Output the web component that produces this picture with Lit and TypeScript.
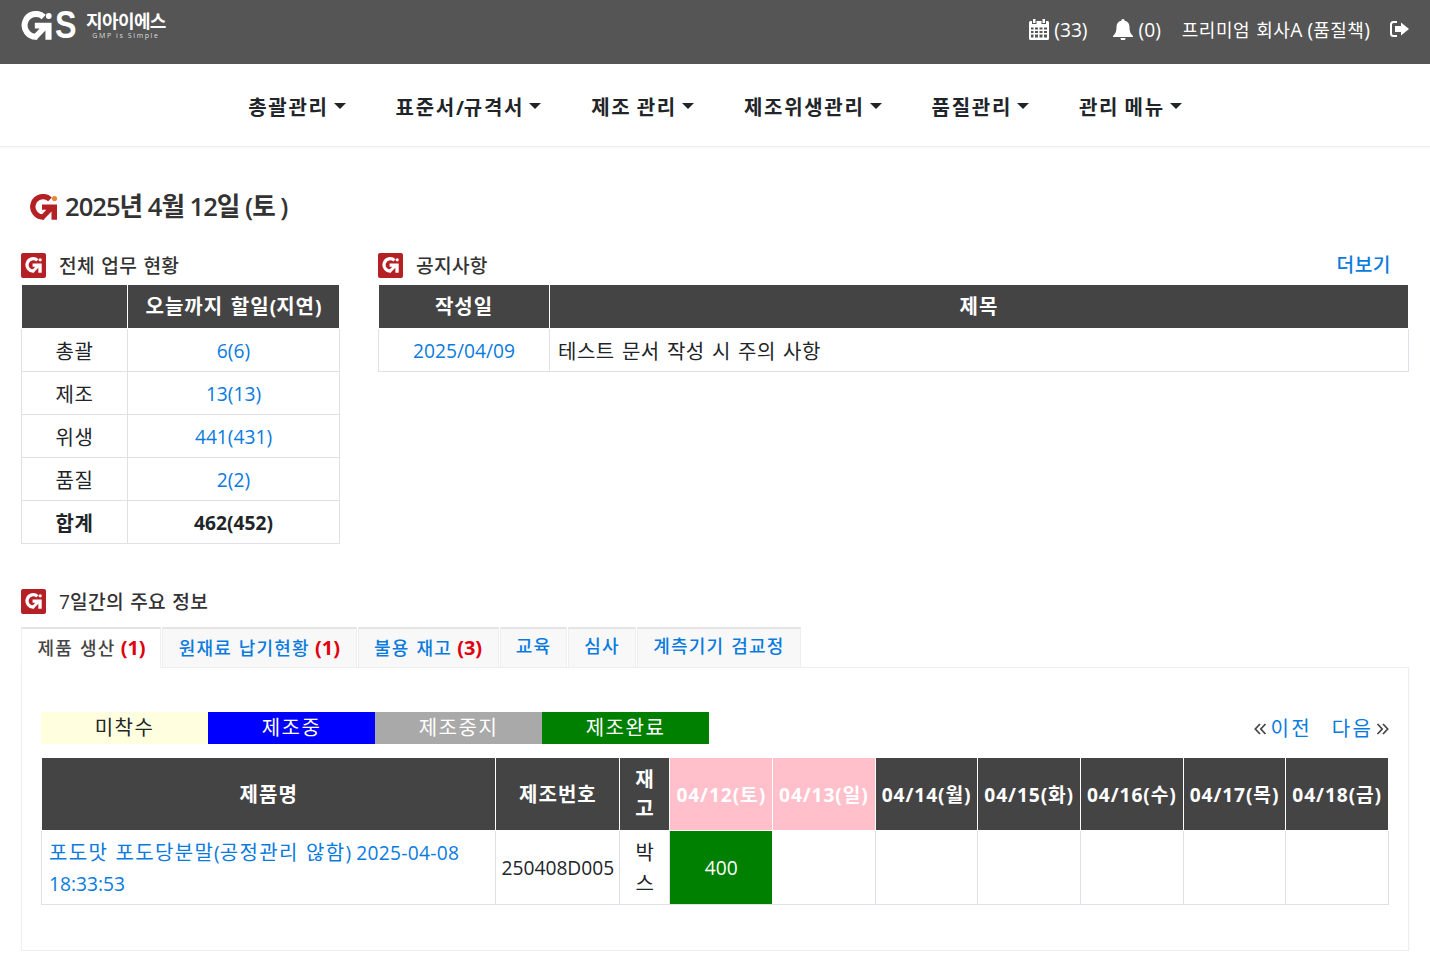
import { LitElement, html, css } from "lit";
import { customElement } from "lit/decorators.js";

const gMark = (cls: string, main: string, dot: string) => html`<svg class=${cls} viewBox="0 0 28 26" aria-hidden="true">
  <path d="M20.500 5.400A10.200 10.200 0 1 0 14.500 23" fill="none" stroke=${main} stroke-width="5.400"/>
  <path d="M12.500 10.500H27.500V25.800H22V17.500L14 25.800 10.500 22.500 16.800 15.800H12.500Z" fill=${main}/>
  <circle cx="25" cy="4.500" r="2.600" fill=${dot}/>
</svg>`;

/* Hangul runs get their own size and spacing: wraps each run in a span, leaves Latin and digits alone. */
const h = (t: string) =>
  t.split(/([\uAC00-\uD7A3]+(?:\s+[\uAC00-\uD7A3]+)*)/).map((part, i) =>
    i % 2 ? html`<span class="h">${part}</span>` : part
  );

const title = (t: string) => html`<h3><span class="badge">${gMark("badge-g", "#fff", "#fff")}</span><span>${h(t)}</span></h3>`;

const caret = html`<span class="caret"></span>`;

@customElement("app-root")
export class AppRoot extends LitElement {
  static styles = css`
    :host { display: block; font-family: "Open Sans", "Noto Sans CJK KR", sans-serif; color: #212529; font-size: 19.2px; background: #fff; }
    * { box-sizing: border-box; }
    .h { font-size: 20px; letter-spacing: .5px; word-spacing: 1.500px; }
    a { color: #0a7bde; text-decoration: none; }
    .top { height: 64px; background: #555; color: #fff; display: flex; justify-content: space-between; padding: 0 21px; }
    .logo { display: flex; align-items: flex-start; padding-top: 11px; }
    .logo-mark { display: flex; align-items: center; height: 29px; font-family: "Liberation Sans", sans-serif; font-weight: 700; font-size: 38px; line-height: 29px; width: 65px; }
    .logo-mark svg { width: 35px; height: 29px; flex: none; margin-left: -2px; }
    .logo-mark span { margin-left: 1px; transform: scaleX(.85); transform-origin: left center; }
    .logo-text { display: flex; flex-direction: column; align-items: center; margin-top: 1px; line-height: 1; }
    .logo-text b { font-size: 18px; font-weight: 700; letter-spacing: -.6px; height: 19px; line-height: 19px; }
    .logo-text small { font-size: 7px; letter-spacing: 1.600px; margin-top: 1px; color: #ddd; }
    .user { display: flex; align-items: center; height: 58px; }
    .user > span { display: flex; align-items: center; gap: 5px; }
    .user > span > svg { fill: #fff; flex: none; }
    .user .h { font-size: 18px; letter-spacing: .5px; word-spacing: 1px; }
    .u-bell { margin-left: 25px; gap: 6px !important; }
    .u-name { margin-left: 21px; white-space: pre; display: block !important; }
    .u-out { margin-left: 20px; }
    nav { height: 83px; display: flex; justify-content: center; align-items: center; gap: 50px; border-bottom: 1px solid #eee; box-shadow: 0 1px 2px rgba(0,0,0,.04); font-weight: 700; padding-top: 2px; }
    nav div { display: flex; align-items: center; gap: 5px; white-space: pre; }
    nav .h { letter-spacing: 1.700px; word-spacing: -1.500px; }
    .caret { width: 0; height: 0; border-left: 6px solid transparent; border-right: 6px solid transparent; border-top: 6px solid #212529; }
    main { padding: 0 21px; }
    h2 { margin: 0; padding: 18px 0 0 8px; height: 102px; display: flex; align-items: center; font-size: 25.600px; font-weight: 600; letter-spacing: -1px; color: #333; line-height: 34px; }
    h2 svg { width: 29px; height: 26px; margin-right: 7px; }
    h2 .h { font-size: 25.600px; letter-spacing: -1px; word-spacing: 0; }
    .row { display: flex; justify-content: space-between; align-items: flex-start; }
    .left { width: 319px; }
    .right { width: 1031px; }
    .head { display: flex; justify-content: space-between; height: 35px; padding-right: 18px; }
    .head a { height: 32px; line-height: 32px; font-weight: 500; }
    .head a .h { font-size: 19.200px; letter-spacing: .5px; }
    h3 { margin: 0 0 3px; height: 32px; display: flex; align-items: center; gap: 13px; font-size: 19.200px; font-weight: 500; color: #333; }
    h3 .h { font-size: 19.200px; letter-spacing: .3px; word-spacing: 1px; }
    .badge { width: 25px; height: 25px; border-radius: 2px; background: #b52025; display: flex; align-items: center; justify-content: center; flex: none; }
    .badge-g { width: 17px; height: 16px; }
    table { border-collapse: collapse; table-layout: fixed; width: 100%; }
    th { background: #444; color: #fff; font-weight: 700; border: 1px solid #fff; text-align: center; }
    th .h { letter-spacing: 1px; }
    td { border: 1px solid #dee2e6; text-align: center; }
    .t1 th, .t2 th { height: 44px; padding: 0 0 2px; }
    .t1 td, .t2 td { height: 43px; padding: 0; }
    .t1 tr:last-child td { font-weight: 700; }
    .t1 .c1 { width: 106px; }
    .t2 .c1 { width: 171px; }
    .t2 td:last-child { text-align: left; padding-left: 8px; }
    .sec2 { margin-top: 41px; }
    .sec2 h3 { margin-bottom: 0; }
    .tabs { display: flex; height: 41px; margin-top: 10px; gap: 1px; position: relative; z-index: 1; }
    .tabs div { height: 41px; padding: 0 15.500px 2px; display: flex; align-items: center; background: #f8f8f8; border: 1px solid #eee; border-top: 2px solid #e4e4e4; font-size: 20px; font-weight: 500; color: #0a7bde; }
    .tabs div > span { white-space: pre; }
    .tabs .h { font-size: 18px; letter-spacing: 1.200px; word-spacing: 1px; }
    .tabs div.on { background: #fff; color: #444; border-bottom-color: #fff; padding-right: 14.500px; }
    .tabs div.plain { padding: 0 15px 6px; }
    .tabs div.wide { padding: 0 15.500px 6px; }
    .tabs b { color: #e0000f; font-weight: 700; }
    .panel { height: 284px; margin-top: -1px; border: 1px solid #eee; box-shadow: 0 1px 2px rgba(0,0,0,.04); padding: 44px 19px 0; }
    .bar { display: flex; justify-content: space-between; align-items: center; height: 32px; }
    .legend { display: flex; }
    .legend div { width: 167px; height: 32px; line-height: 31px; text-align: center; }
    .legend .h { letter-spacing: 1.500px; }
    .ly { background: lightyellow; }
    .lb { background: blue; color: #fff; }
    .lg { background: darkgray; color: #fff; }
    .lo { background: green; color: #fff; }
    .pager { display: flex; align-items: center; height: 32px; margin-top: -2px; }
    .pager svg { width: 13px; height: 12px; margin-top: 3px; fill: none; stroke: #444; stroke-width: 1.700; }
    .pager a { margin: 0 3px 0 4px; }
    .pager a + a { margin-left: 17px; }
    .pager .h { letter-spacing: 2.200px; }
    .t3 { margin-top: 13px; }
    .t3 th { height: 73px; padding: 0; line-height: 29px; }
    .t3 th.d { white-space: nowrap; letter-spacing: .9px; }
    .t3 th.pink { background: pink; }
    .t3 td { height: 74px; padding: 0; line-height: 31px; }
    .t3 .narrow { padding: 0 7px; }
    .t3 td.name { text-align: left; padding: 1px 6px 0 7px; }
    .t3 td.name .h { letter-spacing: 1.300px; word-spacing: 1px; }
    .t3 td.name .dt { letter-spacing: .3px; }
    .t3 td.val { background: green; color: #fff; border-color: #fff; border-bottom-color: #dee2e6; }
    .cn { width: 454.400px; } .cm { width: 124px; } .cs { width: 50px; }
  `;

  render() {
    const days = ["04/12(토)", "04/13(일)", "04/14(월)", "04/15(화)", "04/16(수)", "04/17(목)", "04/18(금)"];
    return html`
      <header class="top">
        <div class="logo">
          <div class="logo-mark">${gMark("", "#fff", "#fff")}<span>S</span></div>
          <div class="logo-text"><b>지아이에스</b><small>GMP is Simple</small></div>
        </div>
        <div class="user">
          <span><svg width="20" height="21" viewBox="0 0 20 21"><path fill-rule="evenodd" d="M4 0h2.500v4H4zM13.500 0H16v4h-2.500zM1.500 2H3v3h4.500V2h5v3H17V2h1.500A1.500 1.500 0 0 1 20 3.500v16a1.500 1.500 0 0 1-1.500 1.500h-17A1.500 1.500 0 0 1 0 19.500v-16A1.500 1.500 0 0 1 1.500 2ZM2 8.500v2h2.500v-2Zm4 0v2h3v-2Zm4.500 0v2h3v-2Zm4.500 0v2h3v-2ZM2 12v2h2.500v-2Zm4 0v2h3v-2Zm4.500 0v2h3v-2Zm4.500 0v2h3v-2ZM2 15.500v3h2.500v-3Zm4 0v3h3v-3Zm4.500 0v3h3v-3Zm4.500 0v3h3v-3Z"/></svg>(33)</span>
          <span class="u-bell"><svg width="20" height="21" viewBox="0 0 20 21"><path d="M10 0a1.700 1.700 0 0 1 1.700 1.800C15 2.500 16.500 5 16.500 8c0 5 1.500 7 3.500 9v1H0v-1c2-2 3.500-4 3.500-9 0-3 1.500-5.500 4.800-6.200A1.700 1.700 0 0 1 10 0ZM7.500 19h5a2.500 2.500 0 0 1-5 0Z"/></svg>(0)</span>
          <span class="u-name">${h("프리미엄 회사A (품질책)")}</span>
          <span class="u-out"><svg width="19" height="16" viewBox="0 0 19 16"><path d="M7 0v2H3.500A1.500 1.500 0 0 0 2 3.500v9A1.500 1.500 0 0 0 3.500 14H7v2H3.500A3.500 3.500 0 0 1 0 12.500v-9A3.500 3.500 0 0 1 3.500 0Z"/><path d="M11 1.500 19 8l-8 6.500V11H5V5h6Z"/></svg></span>
        </div>
      </header>
      <nav>
        ${["총괄관리", "표준서/규격서", "제조 관리", "제조위생관리", "품질관리", "관리 메뉴"].map(
          (n) => html`<div><span>${h(n)}</span>${caret}</div>`
        )}
      </nav>
      <main>
        <h2>${gMark("", "#b52025", "#e8853a")}<span>${h("2025년 4월 12일 (토 )")}</span></h2>
        <div class="row">
          <section class="left">
            ${title("전체 업무 현황")}
            <table class="t1">
              <colgroup><col class="c1" /><col /></colgroup>
              <tr><th></th><th>${h("오늘까지 할일(지연)")}</th></tr>
              <tr><td>${h("총괄")}</td><td><a>6(6)</a></td></tr>
              <tr><td>${h("제조")}</td><td><a>13(13)</a></td></tr>
              <tr><td>${h("위생")}</td><td><a>441(431)</a></td></tr>
              <tr><td>${h("품질")}</td><td><a>2(2)</a></td></tr>
              <tr><td>${h("합계")}</td><td>462(452)</td></tr>
            </table>
          </section>
          <section class="right">
            <div class="head">${title("공지사항")}<a>${h("더보기")}</a></div>
            <table class="t2">
              <colgroup><col class="c1" /><col /></colgroup>
              <tr><th>${h("작성일")}</th><th>${h("제목")}</th></tr>
              <tr><td><a>2025/04/09</a></td><td>${h("테스트 문서 작성 시 주의 사항")}</td></tr>
            </table>
          </section>
        </div>
        <div class="sec2">${title("7일간의 주요 정보")}</div>
        <div class="tabs">
          <div class="on"><span>${h("제품 생산")} <b>(1)</b></span></div>
          <div><span>${h("원재료 납기현황")} <b>(1)</b></span></div>
          <div><span>${h("불용 재고")} <b>(3)</b></span></div>
          <div class="plain"><span>${h("교육")}</span></div>
          <div class="plain"><span>${h("심사")}</span></div>
          <div class="plain wide"><span>${h("계측기기 검교정")}</span></div>
        </div>
        <div class="panel">
          <div class="bar">
            <div class="legend">
              <div class="ly">${h("미착수")}</div><div class="lb">${h("제조중")}</div><div class="lg">${h("제조중지")}</div><div class="lo">${h("제조완료")}</div>
            </div>
            <div class="pager">
              <svg viewBox="0 0 13 12"><path d="M6 1 1.300 6 6 11M11.500 1 6.800 6l4.700 5"/></svg>
              <a>${h("이전")}</a><a>${h("다음")}</a>
              <svg viewBox="0 0 13 12"><path d="M1.500 1l4.700 5-4.700 5M7 1l4.700 5L7 11"/></svg>
            </div>
          </div>
          <table class="t3">
            <colgroup><col class="cn" /><col class="cm" /><col class="cs" />${days.map(() => html`<col />`)}</colgroup>
            <tr>
              <th>${h("제품명")}</th><th>${h("제조번호")}</th><th class="narrow">${h("재고")}</th>
              ${days.map((d, i) => html`<th class="d ${i < 2 ? "pink" : ""}">${d}</th>`)}
            </tr>
            <tr>
              <td class="name"><a>${h("포도맛 포도당분말")}(${h("공정관리 않함")}) <span class="dt">2025-04-08</span> <span>18:33:53</span></a></td>
              <td>250408D005</td><td class="narrow">${h("박스")}</td>
              <td class="val">400</td><td></td><td></td><td></td><td></td><td></td><td></td>
            </tr>
          </table>
        </div>
      </main>
    `;
  }
}
